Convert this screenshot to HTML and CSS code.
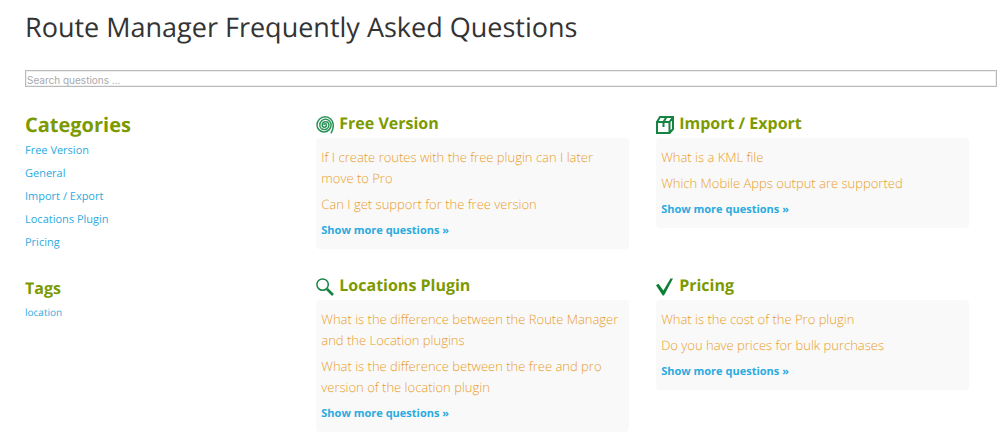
FILE: index.html
```html
<!DOCTYPE html>
<html lang="en">
<head>
<meta charset="utf-8">
<title>Route Manager Frequently Asked Questions</title>
<link rel="stylesheet" href="styles.css">
</head>
<body>
<main class="page">
  <h1 class="title">Route Manager Frequently Asked Questions</h1>
  <form class="search" role="search">
    <input class="search-input" type="text" placeholder="Search questions ..." aria-label="Search questions">
  </form>
  <div class="columns">
    <aside class="sidebar">
      <nav>
        <h2 class="side-title">Categories</h2>
        <ul class="side-list">
          <li><a href="#free">Free Version</a></li>
          <li><a href="#general">General</a></li>
          <li><a href="#import">Import / Export</a></li>
          <li><a href="#locations">Locations Plugin</a></li>
          <li><a href="#pricing">Pricing</a></li>
        </ul>
      </nav>
      <section class="tags">
        <h3 class="heading">Tags</h3>
        <a class="tag" href="#location">location</a>
      </section>
    </aside>
    <div class="categories">
      <section id="free">
        <h3 class="heading">
          <svg class="icon" viewBox="0 0 18 18" aria-hidden="true"><path class="spiral" d="M8 9A1.250 1.250 0 0 1 10.500 9A2.150 2.150 0 0 1 6.200 9A3.350 3.350 0 0 1 12.900 9A4.550 4.550 0 0 1 3.800 9A5.650 5.650 0 0 1 15.100 9A7.050 6.900 0 0 1 1 9A8.150 8.150 0 0 1 17.300 9Q17.400 13.500 15 17.300"/></svg>
          Free Version
        </h3>
        <div class="box">
          <ul class="questions">
            <li><a href="#q1">If I create routes with the free plugin can I later move to Pro</a></li>
            <li><a href="#q2">Can I get support for the free version</a></li>
          </ul>
          <a class="more" href="#free">Show more questions »</a>
        </div>
      </section>
      <section id="import">
        <h3 class="heading">
          <svg class="icon" viewBox="0 0 18 18" aria-hidden="true"><path class="line" d="M1 6H13.500V17H1ZM1 6L4 1H17L13.500 6M17 1V13L13.500 17M10.500 1L7.500 6V11"/></svg>
          Import / Export
        </h3>
        <div class="box">
          <ul class="questions">
            <li><a href="#q3">What is a KML file</a></li>
            <li><a href="#q4">Which Mobile Apps output are supported</a></li>
          </ul>
          <a class="more" href="#import">Show more questions »</a>
        </div>
      </section>
      <section id="locations">
        <h3 class="heading">
          <svg class="icon" viewBox="0 0 18 18" aria-hidden="true"><circle cx="6.600" cy="6.600" r="5.700"/><path class="handle" d="M11 11L17 17"/></svg>
          Locations Plugin
        </h3>
        <div class="box">
          <ul class="questions">
            <li><a href="#q5">What is the difference between the Route Manager and the Location plugins</a></li>
            <li><a href="#q6">What is the difference between the free and pro version of the location plugin</a></li>
          </ul>
          <a class="more" href="#locations">Show more questions »</a>
        </div>
      </section>
      <section id="pricing">
        <h3 class="heading">
          <svg class="icon" viewBox="0 0 18 18" aria-hidden="true"><path class="solid" d="M0 7.300L2.500 5.800L7.400 12.500L14.500 .5H17L8 17.500H6.700Z"/></svg>
          Pricing
        </h3>
        <div class="box">
          <ul class="questions">
            <li><a href="#q7">What is the cost of the Pro plugin</a></li>
            <li><a href="#q8">Do you have prices for bulk purchases</a></li>
          </ul>
          <a class="more" href="#pricing">Show more questions »</a>
        </div>
      </section>
    </div>
  </div>
</main>
</body>
</html>
```
FILE: styles.css
```css
* {
  box-sizing: border-box;
}

body {
  margin: 0;
  background: #fff;
  color: #333;
  font-family: "Open Sans", sans-serif;
  text-rendering: geometricPrecision;
}

h1, h2, h3, ul {
  margin: 0;
  padding: 0;
}

ul {
  list-style: none;
}

a {
  color: #2cabe0;
  text-decoration: none;
}

.page {
  padding: 8px 7px 16px 25px;
}

.title {
  font-size: 27px;
  font-weight: 400;
  line-height: 38px;
}

.search {
  display: flex;
  margin-top: 24px;
}

.search-input {
  width: 100%;
  height: 17px;
  padding: 2px 1px 0;
  border: 1px solid #bbb;
  border-radius: 0;
  outline: 0;
  box-shadow: inset 0 0 0 1px #eee;
  font: 10px/14px Inter, "Liberation Sans", Arial, sans-serif;
}

.search-input::placeholder {
  color: #a9a9a9;
  opacity: 1;
}

.columns {
  display: grid;
  grid-template-columns: 3fr 7fr;
  margin: 24px 1px 0 0;
}

.side-title {
  color: #7c9a00;
  font-size: 20px;
  line-height: 28px;
}

.side-list {
  font-size: 11px;
  line-height: 23px;
}

.tags {
  margin-top: 22px;
}

.tag {
  display: block;
  font-size: 10px;
  line-height: 18px;
}

.categories {
  display: grid;
  grid-template-columns: 1fr 1fr;
  align-items: start;
  gap: 24px 27px;
  padding-right: 27px;
}

.heading {
  display: flex;
  align-items: center;
  gap: 5px;
  margin-bottom: 3px;
  color: #7c9a00;
  font-size: 16px;
  line-height: 24px;
}

.icon {
  width: 18px;
  height: 18px;
  margin-top: 3px;
  fill: none;
  stroke: #158442;
  stroke-width: 1.5;
}

.icon .spiral {
  stroke: #2c9258;
}

.icon .line {
  stroke-width: 2;
}

.icon .handle {
  stroke-width: 2.6;
}

.icon .solid {
  fill: #0d7f35;
  stroke: none;
}

.box {
  padding: 9px 5px 8px;
  border-radius: 4px;
  background: #f9f9f9;
}

.questions {
  display: grid;
  gap: 5px;
  font-size: 13px;
  font-weight: 330;
  line-height: 21px;
}

.questions a {
  color: #e99d2c;
}

.more {
  display: block;
  margin-top: 6px;
  font-size: 11px;
  font-weight: 700;
  line-height: 20px;
}
```
